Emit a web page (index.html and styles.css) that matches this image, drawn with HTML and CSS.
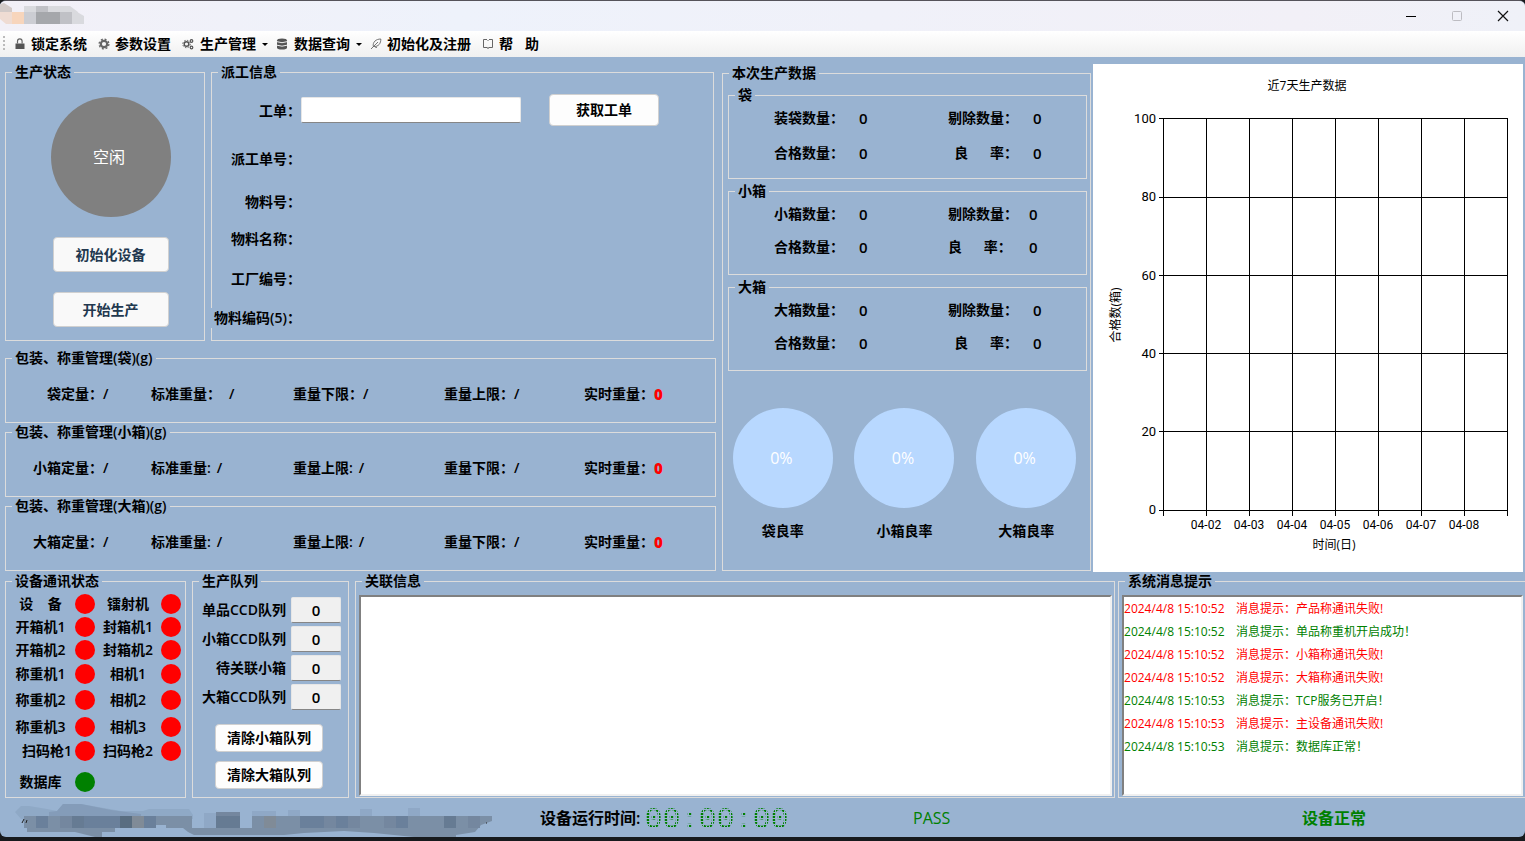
FILE: index.html
```html
<!DOCTYPE html>
<html lang="zh-CN">
<head>
<meta charset="utf-8">
<title>生产管理</title>
<link rel="stylesheet" href="styles.css">
</head>
<body>
<div class="window">
  <header class="titlebar">
    <svg class="title-mask" width="84" height="30" viewBox="0 0 84 30" aria-hidden="true">
      <path fill="#d2cac8" d="M0 3l4-1 8 5v4H0z"/><path fill="#efdcd3" d="M0 11h12v12H6L0 18z"/>
      <path fill="#f7d5bc" d="M12 11h12v12H12z"/><path fill="#d9dade" d="M24 5h46l8 6v12H24z"/>
      <path fill="#cccdd3" d="M24 11h12v12H24z"/><path fill="#a5a7ab" d="M36 11h24v12H36z"/>
      <path fill="#c0c1c6" d="M36 5h12v6H36zM60 11h12v12H60z"/><path fill="#d9dade" d="M72 8l12 7v8H72z"/>
    </svg>
    <div class="controls">
      <button aria-label="最小化"><svg width="12" height="12"><path d="M1 6.500h10" stroke="#000"/></svg></button>
      <button aria-label="最大化" disabled><svg width="12" height="12"><rect x="1.500" y="1.500" width="9" height="9" rx="1" fill="none" stroke="#bdbcc2"/></svg></button>
      <button aria-label="关闭"><svg width="12" height="12"><path d="M1 1l10 10M11 1L1 11" stroke="#111" stroke-width="1.200"/></svg></button>
    </div>
  </header>

  <nav class="menu">
    <span class="grip"></span>
    <button><svg width="12" height="12" viewBox="0 0 12 12"><path d="M1.500 5.500h9V11h-9z" fill="#555"/><path d="M3.500 5.500V3.200a2.300 2.300 0 0 1 4.600 0v2.300" fill="none" stroke="#666" stroke-width="1.200"/></svg>锁定系统</button>
    <button><svg width="12" height="12" viewBox="0 0 12 12"><circle cx="6" cy="6" r="3.200" fill="none" stroke="#666" stroke-width="2.200"/><circle cx="6" cy="6" r="4.900" fill="none" stroke="#666" stroke-width="1.300" stroke-dasharray="2 1.850"/></svg>参数设置</button>
    <button class="has-menu"><svg width="12" height="12" viewBox="0 0 12 12"><circle cx="4.500" cy="6" r="2.300" fill="none" stroke="#555" stroke-width="1.400"/><circle cx="4.500" cy="6" r="3.700" fill="none" stroke="#555" stroke-dasharray="1.500 1.400"/><circle cx="9.500" cy="3" r="1.300" fill="none" stroke="#555" stroke-width="1.200"/><circle cx="9.500" cy="9.500" r="1.300" fill="none" stroke="#555" stroke-width="1.200"/></svg>生产管理<i class="caret"></i></button>
    <button class="has-menu"><svg width="12" height="12" viewBox="0 0 12 12"><path d="M1 2.500Q1 .5 6 .5t5 2v7q0 2-5 2t-5-2z" fill="#555"/><path d="M1 3.700q5 2 10 0M1 7.200q5 2 10 0" fill="none" stroke="#eee"/></svg>数据查询<i class="caret"></i></button>
    <button><svg width="12" height="12" viewBox="0 0 12 12"><path d="M1 11l7-7M3.300 8.500C2.500 4 6 1 10.800 1c.2 4-2 8-7.500 7.500zM5 9l2 .5" fill="none" stroke="#666" stroke-width=".9"/></svg>初始化及注册</button>
    <button><svg width="12" height="12" viewBox="0 0 12 12"><path d="M5 1.500H1.500v8H5l1 1 1-1h3.500v-8H7M6 2v1M6 9v1.500" fill="none" stroke="#666"/></svg><span class="help">帮<span>助</span></span></button>
  </nav>

  <main>
    <section class="upper">
      <div class="left">
        <div class="order-row">
          <fieldset class="state">
            <legend>生产状态</legend>
            <div class="state-disc">空闲</div>
            <button class="btn navy">初始化设备</button>
            <button class="btn navy">开始生产</button>
          </fieldset>
          <fieldset class="order">
            <legend>派工信息</legend>
            <label class="tall" for="order-no">工单：</label>
            <div class="order-entry"><input id="order-no" type="text"><button class="btn">获取工单</button></div>
            <span>派工单号：</span>
            <span>物料号：</span>
            <span>物料名称：</span>
            <span>工厂编号：</span>
            <span class="over-edge">物料编码(5)：</span>
          </fieldset>
        </div>
        <fieldset class="weigh">
          <legend>包装、称重管理(袋)(g)</legend>
          <p><span class="first">袋定量：</span>/</p>
          <p class="wide"><span>标准重量：</span>/</p>
          <p><span>重量下限：</span>/</p>
          <p><span>重量上限：</span>/</p>
          <p><span>实时重量：</span><b>0</b></p>
        </fieldset>
        <fieldset class="weigh">
          <legend>包装、称重管理(小箱)(g)</legend>
          <p><span class="first">小箱定量：</span>/</p>
          <p class="tight"><span>标准重量:</span>/</p>
          <p class="tight"><span>重量上限:</span>/</p>
          <p><span>重量下限：</span>/</p>
          <p><span>实时重量：</span><b>0</b></p>
        </fieldset>
        <fieldset class="weigh">
          <legend>包装、称重管理(大箱)(g)</legend>
          <p><span class="first">大箱定量：</span>/</p>
          <p class="tight"><span>标准重量:</span>/</p>
          <p class="tight"><span>重量上限:</span>/</p>
          <p><span>重量下限：</span>/</p>
          <p><span>实时重量：</span><b>0</b></p>
        </fieldset>
      </div>

      <fieldset class="output">
        <legend>本次生产数据</legend>
        <fieldset class="stats roomy">
          <legend>袋</legend>
          <span>装袋数量：</span><b>0</b><span>剔除数量：</span><b>0</b>
          <span>合格数量：</span><b>0</b><span class="rate">良      率：</span><b>0</b>
        </fieldset>
        <fieldset class="stats near">
          <legend>小箱</legend>
          <span>小箱数量：</span><b>0</b><span>剔除数量：</span><b>0</b>
          <span>合格数量：</span><b>0</b><span>良      率：</span><b>0</b>
        </fieldset>
        <fieldset class="stats">
          <legend>大箱</legend>
          <span>大箱数量：</span><b>0</b><span>剔除数量：</span><b>0</b>
          <span>合格数量：</span><b>0</b><span class="rate">良      率：</span><b>0</b>
        </fieldset>
        <div class="yields">
          <figure><div class="yield-disc">0%</div><figcaption>袋良率</figcaption></figure>
          <figure><div class="yield-disc">0%</div><figcaption>小箱良率</figcaption></figure>
          <figure><div class="yield-disc">0%</div><figcaption>大箱良率</figcaption></figure>
        </div>
      </fieldset>

      <svg class="chart" viewBox="0 0 430 508" role="img" aria-label="近7天生产数据">
        <g class="grid">
          <path d="M66 54.500H415M66 133.500H415M66 211.500H415M66 289.500H415M66 367.500H415M66 446.500H415"/>
          <path d="M70.500 54V452M113.500 54V452M156.500 54V452M199.500 54V452M242.500 54V452M285.500 54V452M328.500 54V452M371.500 54V452M414.500 54V452"/>
        </g>
        <g class="middle">
          <text x="214" y="26">近7天生产数据</text>
          <text x="241" y="485">时间(日)</text>
          <text transform="translate(27 251) rotate(-90)">合格数(箱)</text>
        </g>
        <g class="ticks-y">
          <text x="63" y="59">100</text><text x="63" y="137">80</text><text x="63" y="216">60</text>
          <text x="63" y="294">40</text><text x="63" y="372">20</text><text x="63" y="450">0</text>
        </g>
        <g class="ticks-x">
          <text x="113" y="465">04-02</text><text x="156" y="465">04-03</text><text x="199" y="465">04-04</text>
          <text x="242" y="465">04-05</text><text x="285" y="465">04-06</text><text x="328" y="465">04-07</text>
          <text x="371" y="465">04-08</text>
        </g>
      </svg>
    </section>

    <section class="lower">
      <fieldset class="devices">
        <legend>设备通讯状态</legend>
        <span>设    备</span><i class="led"></i><span>镭射机</span><i class="led"></i>
        <span>开箱机1</span><i class="led"></i><span>封箱机1</span><i class="led"></i>
        <span>开箱机2</span><i class="led"></i><span>封箱机2</span><i class="led"></i>
        <span>称重机1</span><i class="led"></i><span>相机1</span><i class="led"></i>
        <span>称重机2</span><i class="led"></i><span>相机2</span><i class="led"></i>
        <span>称重机3</span><i class="led"></i><span>相机3</span><i class="led"></i>
        <span class="end">扫码枪1</span><i class="led"></i><span>扫码枪2</span><i class="led"></i>
        <span>数据库</span><i class="led ok"></i>
      </fieldset>
      <fieldset class="queues">
        <legend>生产队列</legend>
        <div class="queue-grid">
          <label for="q1">单品CCD队列</label><input id="q1" type="text" value="0" readonly>
          <label for="q2">小箱CCD队列</label><input id="q2" type="text" value="0" readonly>
          <label for="q3">待关联小箱</label><input id="q3" type="text" value="0" readonly>
          <label for="q4">大箱CCD队列</label><input id="q4" type="text" value="0" readonly>
        </div>
        <button class="btn">清除小箱队列</button>
        <button class="btn">清除大箱队列</button>
      </fieldset>
      <fieldset class="listing">
        <legend>关联信息</legend>
        <div class="listbox"></div>
      </fieldset>
      <fieldset class="listing messages">
        <legend>系统消息提示</legend>
        <ul class="listbox">
          <li class="bad"><time>2024/4/8 15:10:52</time>消息提示：产品称通讯失败!</li>
          <li><time>2024/4/8 15:10:52</time>消息提示：单品称重机开启成功！</li>
          <li class="bad"><time>2024/4/8 15:10:52</time>消息提示：小箱称通讯失败!</li>
          <li class="bad"><time>2024/4/8 15:10:52</time>消息提示：大箱称通讯失败!</li>
          <li><time>2024/4/8 15:10:53</time>消息提示：TCP服务已开启！</li>
          <li class="bad"><time>2024/4/8 15:10:53</time>消息提示：主设备通讯失败!</li>
          <li><time>2024/4/8 15:10:53</time>消息提示：数据库正常！</li>
        </ul>
      </fieldset>
    </section>
  </main>

  <footer class="status">
    <svg class="status-mask" width="480" height="39" viewBox="0 0 480 39" aria-hidden="true">
      <path fill="#8fa9c6" d="M0 14l6-6h8l18 3 10 2 6-7h18l40 7h22l6-2h40l4 6v4H6z"/>
      <path fill="#849cb9" d="M42 13l6-7h18l30 6 30 4v3H34v-5z"/>
      <path fill="#8fa8c6" d="M189 15h12v15h-12zM237 13h24v6h-24zM273 12h12v7h-12zM345 11h12v7h-12zM393 10h12v8h-12z"/>
      <path fill="#7b8fa6" d="M9 18h168v12H151v-3h-16v3h-35v4H87v5h-7l-20-5H12v-4H9zM168 30h69v-12h240v5l-11 4-6 7-19 3v4h-22l-60-6-30-2-40 2-20 2h-90l-6-3z"/>
      <path fill="#6a809b" d="M21 18h12v12H21zM69 18h36v12H69zM129 18h12v12h-12zM285 18h24v12h-24zM321 18h12v12h-12zM381 18h12v12h-12z"/>
      <path fill="#74879f" d="M45 18h12v12H45zM201 14h24v16h-24zM309 18h12v12h-12zM333 18h12v12h-12zM369 18h12v12h-12zM453 18h12v12h-12z"/>
      <path fill="#667b93" d="M57 18h12v12H57zM201 18h24v12h-24zM429 18h12v12h-12z"/>
      <path fill="#596d80" d="M105 18h12v12h-12z"/>
      <path fill="#808b97" d="M117 18h12v12h-12zM249 18h12v12h-12z"/>
      <path d="M7 25l2-4M11 25l1-3M471 25h1" stroke="#222"/>
    </svg>
    <div class="runtime">设备运行时间:<time class="clock">00:00:00</time></div>
    <div class="pass">PASS</div>
    <div class="health">设备正常</div>
  </footer>
</div>
</body>
</html>
```

FILE: styles.css
```css
* { box-sizing: border-box; }

body {
  margin: 0;
  background: #171a1d;
  color: #000;
  font: 600 14px/20px "Open Sans", "Noto Sans CJK SC", sans-serif;
}

button, input { font: inherit; color: inherit; }
p, figure, ul { margin: 0; padding: 0; }
li { list-style: none; }

.window {
  display: flex;
  flex-direction: column;
  min-height: calc(100vh - 4px);
  border-top: 1px solid #55535a;
  border-radius: 6px;
  overflow: hidden;
  background: #99b3d1;
}

/* title bar and menu */
.titlebar {
  display: flex;
  justify-content: space-between;
  height: 30px;
  background: linear-gradient(90deg, #f2f0f7, #eef2fb 30%, #f2f0f7 85%, #eff1f8);
}
.title-mask { display: block; }
.controls { display: flex; padding-right: 6px; gap: 14px; }
.controls button {
  width: 32px;
  padding: 0;
  border: 0;
  background: none;
  line-height: 0;
}
.menu {
  display: flex;
  align-items: center;
  height: 26px;
  padding-left: 3px;
  gap: 11px;
  background: linear-gradient(#fff, #f0f0f0);
}
.menu button {
  display: flex;
  align-items: center;
  gap: 5px;
  padding: 0;
  border: 0;
  background: none;
  white-space: nowrap;
}
.menu .has-menu { gap: 6px; margin-right: -3px; }
.grip {
  width: 2px;
  height: 16px;
  margin-right: -2px;
  background: repeating-linear-gradient(#bbb 0 2px, transparent 2px 4px);
}
.caret {
  border: 3px solid transparent;
  border-top-color: #000;
  border-bottom: 0;
}
.help { display: flex; gap: 12px; }

/* group boxes */
fieldset {
  --inset: 0px;
  min-width: 0;
  margin: 0;
  padding: 0 0 0 var(--inset);
  border: 1px solid #dcdcdc;
}
legend {
  margin-left: calc(6px - var(--inset));
  padding: 0 3px;
  line-height: 18px;
}

.upper {
  display: grid;
  grid-template-columns: 715fr 369fr 430fr;
  gap: 2px;
  padding: 6px 2px 0 5px;
}
.left { padding-right: 4px; }
.order-row {
  display: grid;
  grid-template-columns: 200fr 503fr;
  gap: 6px;
  margin: 0 2px 8px 0;
}

.btn {
  padding: 0;
  border: 1px solid #d0d0d0;
  border-radius: 4px;
  background: #fdfdfd;
  text-align: center;
}
.state {
  --inset: 11px;
  display: flex;
  flex-direction: column;
  align-items: center;
  gap: 20px;
  padding-top: 16px;
  padding-bottom: 13px;
}
.state-disc, .yield-disc {
  display: flex;
  align-items: center;
  justify-content: center;
  padding-right: 3px;
  border-radius: 50%;
  color: #fff;
  font-size: 16px;
  font-weight: 400;
}
.state-disc { width: 120px; height: 120px; background: #808080; }
.state .btn { width: 116px; height: 35px; }
.navy { color: #22384f; background: #f9f9f9; }

.order {
  display: grid;
  grid-template-columns: 89px 1fr;
  grid-template-rows: 55px 43px 37px 40px 39px 20px;
  align-items: start;
  padding-top: 13px;
}
.order > span, .order > label { grid-column: 1; text-align: right; white-space: nowrap; }
.order .tall { line-height: 34px; }
.over-edge { margin-left: -1px; background: #99b3d1; }
.order-entry { display: flex; align-items: center; gap: 28px; }
.order-entry input { width: 220px; height: 26px; }
.order-entry .btn { width: 110px; height: 32px; }
input {
  min-width: 0;
  padding: 0 4px;
  border: 1px solid #e6e6e6;
  border-bottom-color: #868686;
  border-radius: 2px;
  background: #fff;
}

.weigh {
  --inset: 27px;
  display: grid;
  grid-template-columns: 118fr 142fr 151fr 140fr 131fr;
  padding-top: 17px;
  padding-bottom: 18px;
}
.weigh p { display: flex; white-space: nowrap; }
.weigh .first { min-width: 70px; text-align: right; }
.weigh .tight { gap: 6px; }
.weigh .wide { gap: 8px; }
.weigh b { color: #f00; font-size: 15px; }

/* production figures */
.output {
  --inset: 5px;
  display: flex;
  flex-direction: column;
  gap: 3px;
  margin: 1px 0;
  padding-top: 4px;
  padding-right: 3px;
}
.stats {
  --inset: 45px;
  display: grid;
  grid-template-columns: 85fr 89fr 85fr 53fr;
  row-gap: 13px;
  padding-top: 4px;
  padding-bottom: 17px;
}
.roomy { row-gap: 15px; padding-bottom: 15px; }
.near { grid-template-columns: 85fr 89fr 81fr 57fr; }
.stats span { width: 70px; white-space: pre; }
.stats .rate { text-align: right; }
.stats b { font-size: 15px; font-weight: 600; }
.yields {
  display: grid;
  grid-template-columns: repeat(3, 1fr);
  margin-left: -6px;
  padding-top: 34px;
}
.yields figure { display: flex; flex-direction: column; align-items: center; gap: 13px; }
.yield-disc { width: 100px; height: 100px; background: #b8d8ff; }

/* chart */
.chart {
  display: block;
  width: 100%;
  margin-top: 1px;
  background: #fff;
  font-weight: 400;
}
.grid path { stroke: #000; fill: none; }
.middle text { text-anchor: middle; font-size: 12px; }
.ticks-y text { text-anchor: end; font: 13px Roboto, sans-serif; }
.ticks-x text { text-anchor: middle; font: 12px Roboto, sans-serif; }

/* lower row */
.lower {
  display: grid;
  grid-template-columns: 181px 157px 762fr 405fr;
  column-gap: 6px;
  padding-left: 5px;
}
.devices {
  display: grid;
  grid-template-columns: 69px 20px 66px 20px;
  grid-template-rows: 23px 23px 24px 26px 27px 24px 31px 20px;
  align-items: start;
  padding: 4px 0 5px;
}
.devices span { text-align: center; white-space: pre; }
.devices .end { padding-right: 3px; text-align: right; }
.led { width: 20px; height: 20px; border-radius: 50%; background: #f00; }
.led.ok { background: #008000; }

.queues {
  --inset: 7px;
  display: flex;
  flex-direction: column;
  padding-top: 7px;
  padding-right: 7px;
}
.queue-grid {
  display: grid;
  grid-template-columns: 1fr 50px;
  align-items: center;
  gap: 3px 5px;
  margin-bottom: 5px;
}
.queue-grid label { text-align: right; white-space: nowrap; }
.queue-grid input { height: 26px; text-align: center; background: #f0f0f0; font-size: 15px; }
.queues .btn { width: 108px; height: 28px; margin: 9px 0 0 15px; }

.listing { --inset: 3px; display: flex; padding-top: 5px; padding-right: 2px; padding-bottom: 1px; }
.listbox {
  flex: 1;
  border: 2px solid;
  border-color: #808080 #f0f0f0 #f0f0f0 #808080;
  background: #fff;
}
.messages { margin-left: -3px; border-right: 0; }
.messages li {
  display: flex;
  color: #008000;
  font-size: 12px;
  font-weight: 400;
  line-height: 23px;
  white-space: nowrap;
}
.messages .bad { color: #f00; }
.messages time { width: 112px; }

/* status bar */
.status {
  display: grid;
  grid-template-columns: 525fr 373fr 389fr 223fr;
  flex: 1;
  align-items: center;
  min-height: 39px;
  padding-left: 15px;
  font-size: 16px;
}
.status-mask { display: block; }
.runtime { display: flex; align-items: center; gap: 4px; white-space: nowrap; }
.clock {
  padding-top: 6px;
  background: repeating-linear-gradient(90deg, transparent 0 2px, #99b3d1 2px 3px), repeating-linear-gradient(#008000 0 2px, #99b3d1 2px 3px);
  -webkit-background-clip: text;
  background-clip: text;
  color: transparent;
  font: 400 30px/33px "Liberation Mono", monospace;
}
.pass { color: #008000; font-weight: 400; }
.health { color: #008000; }
```
